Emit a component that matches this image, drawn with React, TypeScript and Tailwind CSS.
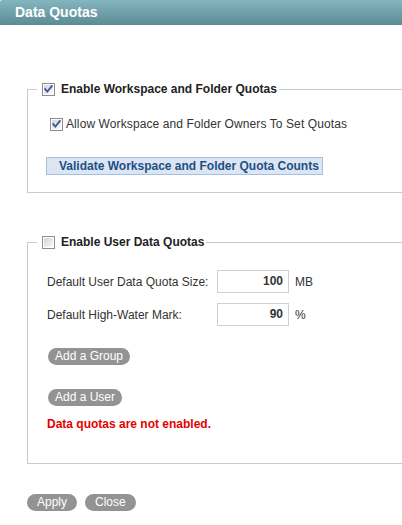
import React from "react";

function Box({ checked }: { checked: boolean }) {
  return (
    <svg width="13" height="13" viewBox="0 0 13 13" className="shrink-0 block">
      <defs>
        <linearGradient id={checked ? "cbOn" : "cbOff"} x1="0" y1="0" x2="1" y2="1">
          <stop offset="0" stopColor="#d4d4d4" />
          <stop offset="1" stopColor="#fafafa" />
        </linearGradient>
      </defs>
      <rect x="0.5" y="0.5" width="12" height="12" fill="#fff" stroke="#8d8d8d" />
      <rect x="2" y="2" width="9" height="9" fill={`url(#${checked ? "cbOn" : "cbOff"})`} />
      {checked && (
        <path d="M3.2 6.2 L5.3 8.6 L9.8 3.2" fill="none" stroke="#3e5aa0" strokeWidth="1.9" strokeLinecap="square" />
      )}
    </svg>
  );
}

function Pill({ label, wide }: { label: string; wide?: boolean }) {
  return (
    <button
      className={
        wide
          ? "h-[17px] rounded-full bg-[#939393] px-[7px] text-[12px] leading-[17px] text-white"
          : "h-[17px] rounded-full bg-[#939393] px-[10px] text-[12px] leading-[17px] text-white"
      }
    >
      {label}
    </button>
  );
}

export default function App() {
  return (
    <div
      className="w-[402px] h-[525px] overflow-hidden bg-white text-[#333] text-[12px]"
      style={{ fontFamily: '"Liberation Sans", Arial, sans-serif' }}
    >
      <div className="h-[25px] rounded-tl-[2px] bg-gradient-to-b from-[#85b5bf] to-[#5b8c96] pl-[15px] text-[14px] font-bold leading-[25px] text-white">
        Data Quotas
      </div>

      {/* Workspace / folder quotas */}
      <fieldset className="mt-[56px] ml-[27px] w-[420px] border border-[#cacaca] pl-[9px] pb-[17px]">
        <legend className="flex h-[16px] items-center px-[2px] font-bold text-[#222]">
          <span className="ml-[3px]"><Box checked /></span>
          <span className="ml-[6px]">Enable Workspace and Folder Quotas</span>
        </legend>
        <div className="mt-[19px] ml-[13px] flex h-[16px] items-center">
          <Box checked />
          <span className="ml-[3px] tracking-[0.1px]">Allow Workspace and Folder Owners To Set Quotas</span>
        </div>
        <button className="mt-[25px] ml-[9px] block h-[18px] w-[277px] border border-[#a5bfdf] bg-[#dbe5f3] pl-[12px] text-left text-[12px] font-bold leading-[16px] text-[#1d4f84]">
          Validate Workspace and Folder Quota Counts
        </button>
      </fieldset>

      {/* User data quotas */}
      <fieldset className="mt-[41px] ml-[27px] w-[420px] border border-[#cacaca] pl-[9px] pb-[31px]">
        <legend className="flex h-[16px] items-center px-[2px] font-bold text-[#222]">
          <span className="ml-[3px]"><Box checked={false} /></span>
          <span className="ml-[6px]">Enable User Data Quotas</span>
        </legend>
        <div className="mt-[20px] ml-[10px] flex items-center">
          <span className="w-[170px]">Default User Data Quota Size:</span>
          <div className="h-[23px] w-[72px] border border-[#cfcfcf] pr-[5px] text-right font-bold leading-[21px]">100</div>
          <span className="ml-[6px]">MB</span>
        </div>
        <div className="mt-[10px] ml-[10px] flex items-center">
          <span className="w-[170px]">Default High-Water Mark:</span>
          <div className="h-[23px] w-[72px] border border-[#cfcfcf] pr-[5px] text-right font-bold leading-[21px]">90</div>
          <span className="ml-[6px]">%</span>
        </div>
        <div className="mt-[21px] ml-[11px]">
          <Pill label="Add a Group" wide />
        </div>
        <div className="mt-[23px] ml-[11px]">
          <Pill label="Add a User" wide />
        </div>
        <div className="mt-[10px] ml-[10px] font-bold leading-[16px] text-[#e60000]">
          Data quotas are not enabled.
        </div>
      </fieldset>

      <div className="mt-[30px] ml-[27px] flex gap-[8px]">
        <Pill label="Apply" />
        <Pill label="Close" />
      </div>
    </div>
  );
}
